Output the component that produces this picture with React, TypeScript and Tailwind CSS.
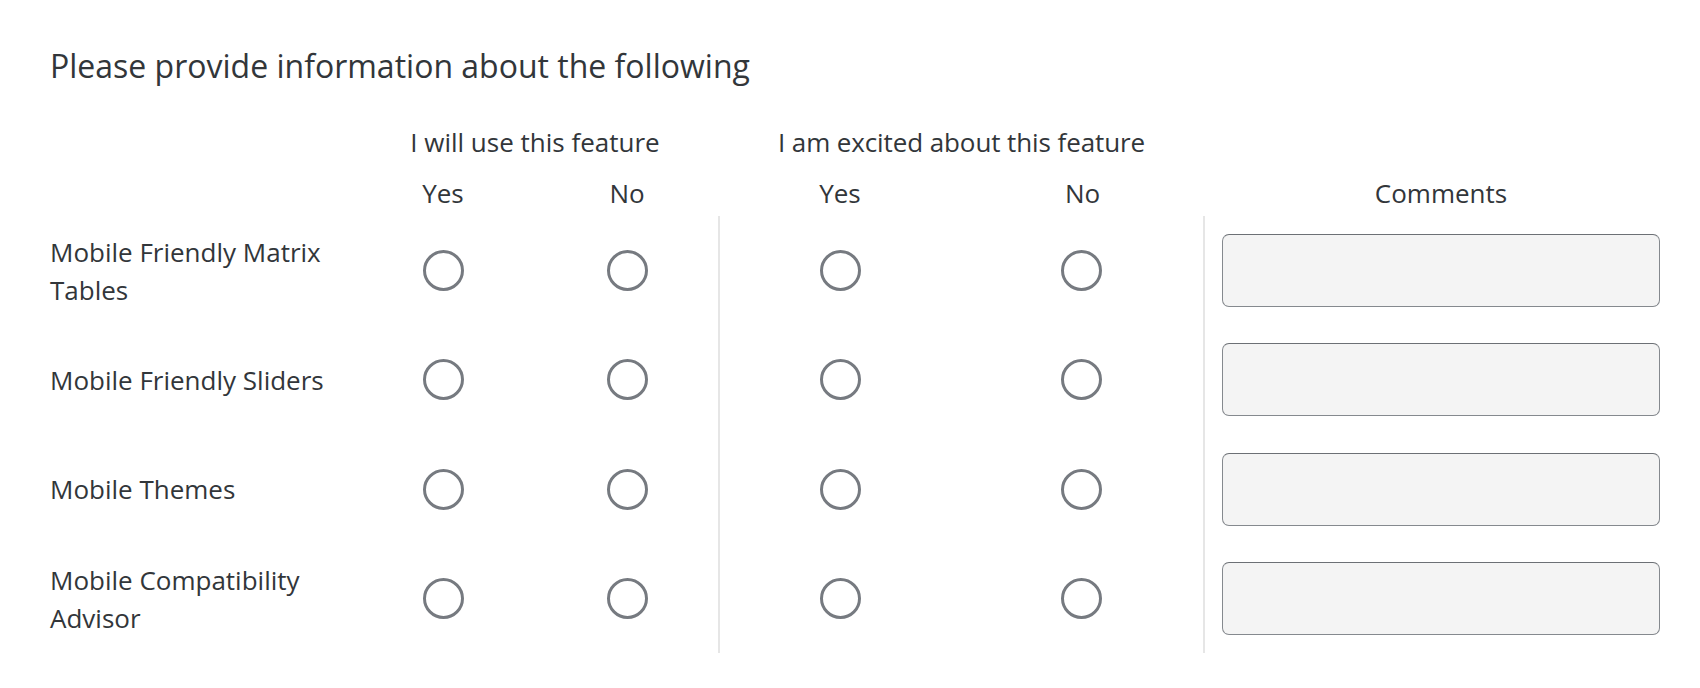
import React from "react";

const features = [
  "Mobile Friendly Matrix Tables",
  "Mobile Friendly Sliders",
  "Mobile Themes",
  "Mobile Compatibility Advisor",
];

const Radio = () => (
  <span className="block w-[41px] h-[41px] rounded-full border-[3px] border-[#767a80] bg-white" />
);

const App = () => {
  return (
    <div
      className="w-[1700px] h-[688px] bg-white text-[#32363a] pt-[44px] pl-[50px]"
      style={{ fontFamily: '"Open Sans", "Noto Sans", sans-serif' }}
    >
      <h1 className="h-[44px] leading-[44px] text-[32px] font-normal">
        Please provide information about the following
      </h1>

      {/* group headers */}
      <div className="flex mt-[34px] h-[40px] items-center text-[26px]">
        <div className="w-[301px]" />
        <div className="w-[368px] text-center">I will use this feature</div>
        <div className="w-[485px] text-center tracking-[-0.1px]">I am excited about this feature</div>
      </div>

      {/* column headers */}
      <div className="flex mt-[9px] h-[45px] items-center text-[26px]">
        <div className="w-[301px]" />
        <div className="w-[184px] text-center">Yes</div>
        <div className="w-[184px] text-center">No</div>
        <div className="w-[242px] text-center">Yes</div>
        <div className="w-[243px] text-center">No</div>
        <div className="w-[474px] text-center">Comments</div>
      </div>

      {features.map((name) => (
        <div key={name} className="flex h-[109.3px] text-[26px]">
          <div className="w-[301px] pr-[11px] flex items-center leading-[38px]">
            {name}
          </div>
          <div className="w-[184px] flex items-center justify-center">
            <Radio />
          </div>
          <div className="w-[184px] flex items-center justify-center">
            <Radio />
          </div>
          <div className="w-[242px] flex items-center justify-center border-l-2 border-[#e6e6e6] -ml-[1px]">
            <Radio />
          </div>
          <div className="w-[243px] flex items-center justify-center">
            <Radio />
          </div>
          <div className="w-[474px] flex items-center px-[17px] border-l-2 border-[#e6e6e6]">
            <input
              type="text"
              className="w-[438px] h-[73px] rounded-[7px] bg-[#f4f4f4] border-[1.5px] border-[#85898e] border-t-[#6c7075] outline-none"
            />
          </div>
        </div>
      ))}
    </div>
  );
};

export default App;
